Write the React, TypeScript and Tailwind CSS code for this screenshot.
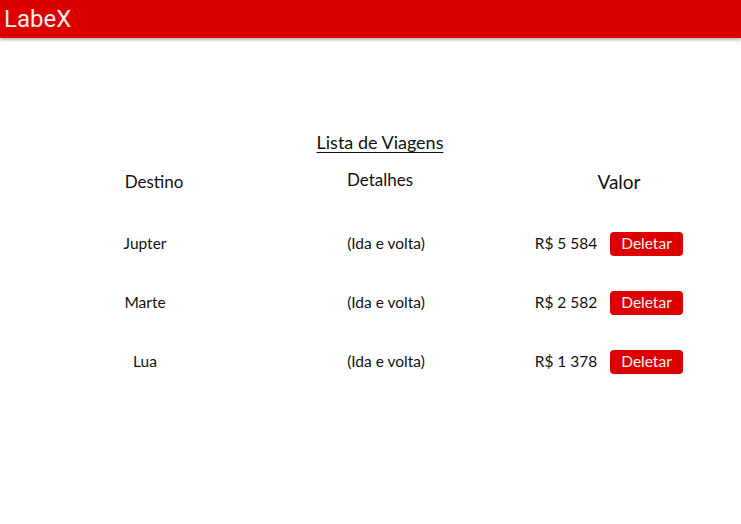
import React from "react";

const viagens = [
  { nome: "Jupter", valor: "R$ 5 584" },
  { nome: "Marte", valor: "R$ 2 582" },
  { nome: "Lua", valor: "R$ 1 378" },
];

export default function App() {
  return (
    <div className="min-h-screen bg-white text-[#111]" style={{ fontFamily: "Lato, 'Open Sans', sans-serif" }}>
      <header className="h-[38px] bg-[#dd0000] flex items-center px-[4px] shadow-[0_2px_3px_rgba(0,0,0,0.3)]">
        <span className="text-[24px] text-[#f0f0f0] leading-none" style={{ fontFamily: "Roboto, sans-serif" }}>
          LabeX
        </span>
      </header>

      <main className="pt-[91px]">
        <h2 className="text-center text-[18px] leading-[26px] underline underline-offset-[3px] pl-[19px]">
          Lista de Viagens
        </h2>

        <div className="flex mt-[14px] h-[26px] items-center">
          <div className="ml-[54px] w-[200px] text-center text-[17px]">Destino</div>
          <div className="w-[252px] text-center text-[17px] -mt-[4px]">Detalhes</div>
          <div className="w-[226px] text-center text-[19px]">Valor</div>
        </div>

        <div className="mt-[36px] flex flex-col gap-[34px]">
          {viagens.map((v) => (
            <div key={v.nome} className="flex items-center h-[25px] text-[15.5px]">
              <div className="ml-[45px] w-[200px] text-center">{v.nome}</div>
              <div className="w-[282px] text-center">(Ida e volta)</div>
              <div className="ml-[3px] w-[72px] text-center">{v.valor}</div>
              <button className="ml-[8px] w-[73px] h-[24px] rounded-[4px] bg-[#dd0000] text-[#f4f4f4] text-[15.5px] leading-none">
                Deletar
              </button>
            </div>
          ))}
        </div>
      </main>
    </div>
  );
}
